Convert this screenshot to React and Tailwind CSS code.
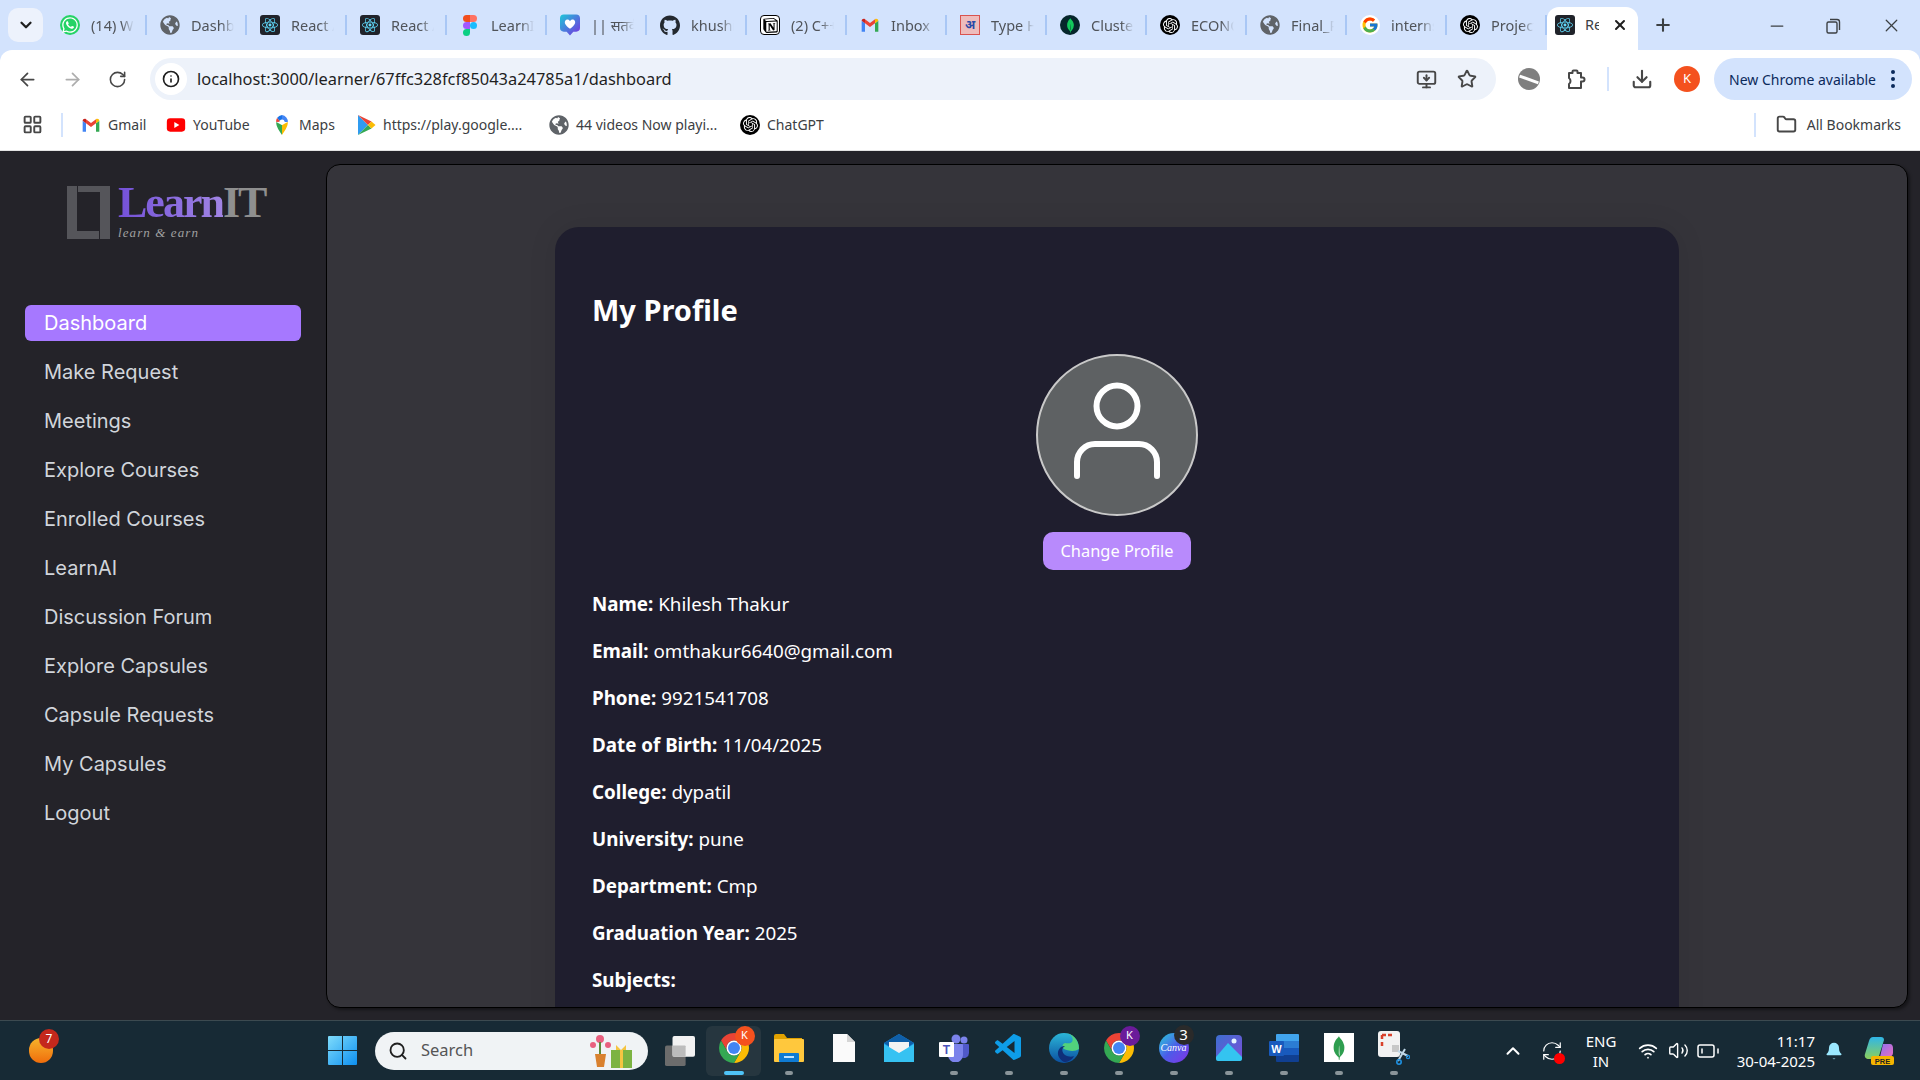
import React from 'react';
import {
  ArrowLeft, ArrowRight, RotateCw, Info, ChevronDown, ChevronUp, X, Plus, Minus, Star, Download,
  MonitorDown, LayoutGrid, Folder, Search, Wifi, Volume2, BatteryLow, Bell, RefreshCw,
} from 'lucide-react';
import { FaGlobeAmericas, FaGithub, FaWhatsapp } from 'react-icons/fa';
import { FcGoogle } from 'react-icons/fc';
import { SiReact, SiNotion, SiMongodb, SiOpenai } from 'react-icons/si';
import { VscVscode } from 'react-icons/vsc';

// small multi colour logos
function GmailIcon({ size = 20 }) {
  return (
    <svg width={size} height={size} viewBox="0 0 24 24">
      <path d="M2 20h4V10L2 7z" fill="#4285f4" />
      <path d="M18 20h4V7l-4 3z" fill="#34a853" />
      <path d="M6 10l6 4.5 6-4.5V5l-6 4.5L6 5z" fill="#ea4335" />
      <path d="M2 7c0-2.2 2.5-3.2 4-2v5z" fill="#c5221f" />
      <path d="M22 7c0-2.2-2.5-3.2-4-2v5z" fill="#fbbc04" />
    </svg>
  );
}

function YoutubeIcon() {
  return (
    <svg width="20" height="20" viewBox="0 0 24 24">
      <rect x="1" y="4" width="22" height="16" rx="4" fill="#f00" />
      <path d="M10 8.5v7l6-3.5z" fill="#fff" />
    </svg>
  );
}

function MapsIcon() {
  return (
    <svg width="20" height="22" viewBox="0 0 24 26">
      <path d="M12 25C9 20 5 16 5 9.5L12 13z" fill="#34a853" />
      <path d="M12 25c3-5 7-9 7-15.500L12 13z" fill="#fbbc04" />
      <path d="M6 4.500A9 9 0 0 1 12 1v7a3 3 0 0 0-2 1z" fill="#1a73e8" />
      <path d="M5 9.500a8 8 0 0 1 1-5l4 4.500z" fill="#ea4335" />
      <path d="M12 1a8 8 0 0 1 7 8.500h-4A3 3 0 0 0 12 7z" fill="#4285f4" />
      <circle cx="12" cy="9.500" r="3" fill="#fff" />
    </svg>
  );
}

function PlayIcon() {
  return (
    <svg width="20" height="22" viewBox="0 0 20 22">
      <path d="M2 1v20l10-10z" fill="#2f9bf0" />
      <path d="M2 1l10 10 3.500-3.500z" fill="#ea4335" />
      <path d="M2 21l10-10 3.500 3.500z" fill="#34a853" />
      <path d="M15.500 7.500L19.500 11l-4 3.500L12 11z" fill="#fbbc04" />
    </svg>
  );
}

function FigmaIcon() {
  return (
    <svg width="14" height="21" viewBox="0 0 12 18">
      <path d="M6 0H3a3 3 0 0 0 0 6h3z" fill="#f24e1e" />
      <path d="M6 0h3a3 3 0 0 1 0 6H6z" fill="#ff7262" />
      <path d="M6 6H3a3 3 0 0 0 0 6h3z" fill="#a259ff" />
      <circle cx="9" cy="9" r="3" fill="#1abcfe" />
      <path d="M6 12H3a3 3 0 1 0 3 3z" fill="#0acf83" />
    </svg>
  );
}

function HeartBadge() {
  return (
    <svg width="21" height="22" viewBox="0 0 21 22">
      <defs>
        <linearGradient id="hb" x1="0" y1="0" x2="1" y2="1">
          <stop offset="0" stopColor="#1cc8d8" />
          <stop offset="1" stopColor="#7a2fe0" />
        </linearGradient>
      </defs>
      <path d="M4 0h13a4 4 0 0 1 4 4v10a4 4 0 0 1-4 4h-3l-3.500 4L7 18H4a4 4 0 0 1-4-4V4a4 4 0 0 1 4-4z" fill="url(#hb)" />
      <path d="M10.500 15C5 11 4.500 8.500 5.500 6.500c1.300-2 4-1.500 5 .5 1-2 3.700-2.500 5-.5 1 2 .5 4.500-5 8.500z" fill="#fff" />
    </svg>
  );
}

function ReactTile() {
  return (
    <span className="flex h-5 w-5 items-center justify-center rounded-[3px] bg-[#20232a]">
      <SiReact className="h-4 w-4 text-[#61dafb]" />
    </span>
  );
}

function Globe({ size = 20 }) {
  return <FaGlobeAmericas size={size} className="text-[#5f6368]" />;
}

function OpenaiDot({ size = 20 }) {
  return (
    <span className="flex items-center justify-center rounded-full bg-black" style={{ width: size, height: size }}>
      <SiOpenai size={size - 5} className="text-white" />
    </span>
  );
}

function ChromeIcon({ size = 30 }) {
  return (
    <svg width={size} height={size} viewBox="4 4 40 40">
      <path d="M24 4C16.600 4 10.100 8 6.700 14l8.600 15A10 10 0 0 1 24 14h17.300C37.900 8 31.400 4 24 4z" fill="#ea4335" />
      <path d="M41.300 14H24a10 10 0 0 1 8.700 15L24 44c11 0 20-9 20-20 0-3.600-1-7-2.700-10z" fill="#fbbc04" />
      <path d="M6.700 14A20 20 0 0 0 24 44l8.700-15a10 10 0 0 1-17.400 0z" fill="#34a853" />
      <circle cx="24" cy="24" r="10" fill="#fff" />
      <circle cx="24" cy="24" r="8" fill="#4285f4" />
    </svg>
  );
}

function PuzzleIcon() {
  return (
    <svg width="24" height="24" viewBox="0 0 24 24" fill="none" stroke="currentColor" strokeWidth="2" strokeLinejoin="round">
      <path d="M6 6h3.500V4.500a1 1 0 0 1 1-1h3a1 1 0 0 1 1 1V6H18v4.500h1.500a2 2 0 0 1 0 4H18V21H6v-4a3.500 3.500 0 0 0 1.500-3A3.500 3.500 0 0 0 6 11z" />
    </svg>
  );
}

const TABS = [
  { icon: <span className="flex h-5 w-5 items-center justify-center rounded-full bg-[#25d366]"><FaWhatsapp size={18} className="text-white" /></span>, label: '(14) WhatsApp' },
  { icon: <Globe />, label: 'Dashboard' },
  { icon: <ReactTile />, label: 'React App' },
  { icon: <ReactTile />, label: 'React App' },
  { icon: <FigmaIcon />, label: 'LearnIT' },
  { icon: <HeartBadge />, label: '|| सतर्क' },
  { icon: <FaGithub size={21} className="text-[#24292f]" />, label: 'khushi' },
  { icon: <span className="flex h-5 w-5 items-center justify-center rounded-[4px] border border-black bg-white"><SiNotion size={15} className="text-black" /></span>, label: '(2) C++' },
  { icon: <GmailIcon />, label: 'Inbox' },
  { icon: <span className="flex h-5 w-5 items-center justify-center border border-[#d9534f] bg-[#eebcbc] text-[12px] font-bold text-[#2a4aa8]">अ</span>, label: 'Type Hindi' },
  { icon: <span className="flex h-5 w-5 items-center justify-center rounded-full bg-[#06262b]"><SiMongodb size={15} className="text-[#13c85c]" /></span>, label: 'Cluster' },
  { icon: <OpenaiDot />, label: 'ECONOMICS' },
  { icon: <Globe />, label: 'Final_Project' },
  { icon: <span className="flex h-5 w-5 items-center justify-center rounded-full bg-white"><FcGoogle size={18} /></span>, label: 'internship' },
  { icon: <OpenaiDot />, label: 'Project' },
];

const BOOKMARKS = [
  { icon: <GmailIcon />, label: 'Gmail', w: 'w-[85px]' },
  { icon: <YoutubeIcon />, label: 'YouTube', w: 'w-[106px]' },
  { icon: <MapsIcon />, label: 'Maps', w: 'w-[84px]' },
  { icon: <PlayIcon />, label: 'https://play.google....', w: 'w-[193px]' },
  { icon: <Globe />, label: '44 videos Now playi...', w: 'w-[191px]' },
  { icon: <OpenaiDot />, label: 'ChatGPT', w: 'w-[90px]' },
];

const NAV = [
  'Dashboard', 'Make Request', 'Meetings', 'Explore Courses', 'Enrolled Courses', 'LearnAI',
  'Discussion Forum', 'Explore Capsules', 'Capsule Requests', 'My Capsules', 'Logout',
];

const PROFILE = [
  ['Name:', 'Khilesh Thakur'],
  ['Email:', 'omthakur6640@gmail.com'],
  ['Phone:', '9921541708'],
  ['Date of Birth:', '11/04/2025'],
  ['College:', 'dypatil'],
  ['University:', 'pune'],
  ['Department:', 'Cmp'],
  ['Graduation Year:', '2025'],
  ['Subjects:', ''],
];

function TabStrip() {
  return (
    <div className="flex h-[50px] shrink-0 items-start bg-[#d3e3fd] pl-2">
      <div className="mt-2 flex h-[34px] w-[35px] items-center justify-center rounded-[10px] bg-[#edf2fc]">
        <ChevronDown size={18} strokeWidth={3} className="text-[#1f1f1f]" />
      </div>
      <div className="ml-[4px] flex">
        {TABS.map((tab, i) => (
          <div key={i} className="mt-[15px] flex h-5 w-[100px] items-center">
            <div className="ml-[13px] flex w-5 shrink-0 items-center justify-center">{tab.icon}</div>
            <div className="ml-[11px] w-[43px] overflow-hidden whitespace-nowrap text-[14.500px] leading-5 text-[#50545a] [mask-image:linear-gradient(to_right,black_70%,transparent)]">
              {tab.label}
            </div>
            <div className="ml-auto h-5 w-[2px] bg-[#a9c7f5]" />
          </div>
        ))}
      </div>
      {/* active tab */}
      <div className="mt-[7px] flex h-[43px] w-[91px] items-center rounded-t-[12px] bg-white pb-[7px] pl-2">
        <ReactTile />
        <div className="ml-[10px] w-[14px] overflow-hidden whitespace-nowrap text-[14.500px] text-[#3c4043]">React</div>
        <X size={16} strokeWidth={3} className="ml-[13px] text-[#1f1f1f]" />
      </div>
      <Plus size={20} strokeWidth={2.5} className="mt-[15px] ml-[15px] text-[#3c4043]" />
      <div className="ml-auto mt-[15px] flex w-[153px] items-center pr-[18px] text-[#3c4043]">
        <Minus size={20} strokeWidth={1.5} />
        <svg width="18" height="18" viewBox="0 0 18 18" fill="none" stroke="currentColor" strokeWidth="1.4" className="ml-[37px]">
          <rect x="3" y="5" width="10" height="11" rx="1.500" />
          <path d="M6 2.500h7a2.500 2.500 0 0 1 2.500 2.500v8" />
        </svg>
        <X size={21} strokeWidth={1.4} className="ml-auto" />
      </div>
    </div>
  );
}

function Toolbar() {
  return (
    <div className="flex h-[50px] shrink-0 items-start rounded-t-[12px] bg-white pt-2">
      <div className="flex h-[42px] w-[150px] items-center text-[#474747]">
        <ArrowLeft size={21} className="ml-[17px]" />
        <ArrowRight size={21} className="ml-6 text-[#adadad]" />
        <RotateCw size={19} className="ml-[25px]" />
      </div>
      <div className="flex h-[42px] w-[1346px] items-center rounded-full bg-[#edf2fa] pl-[5px] pr-[19px]">
        <div className="flex h-8 w-8 items-center justify-center rounded-full bg-white">
          <Info size={18} strokeWidth={2.2} className="text-[#1f1f1f]" />
        </div>
        <span className="ml-[10px] text-[16.400px] text-[#1f1f1f]">localhost:3000/learner/67ffc328fcf85043a24785a1/dashboard</span>
        <MonitorDown size={21} strokeWidth={2.2} className="ml-auto text-[#474747]" />
        <Star size={20} strokeWidth={2.3} className="ml-[20px] text-[#474747]" />
      </div>
      <div className="flex h-[42px] flex-1 items-center pr-2 text-[#474747]">
        <span className="ml-[22px] flex h-[22px] w-[22px] items-center justify-center rounded-full bg-[#7f7f7f]">
          <span className="h-[3px] w-[20px] rotate-[20deg] bg-white" />
        </span>
        <span className="ml-[23px]"><PuzzleIcon /></span>
        <div className="ml-[20px] h-[24px] w-[2px] bg-[#d3e3fd]" />
        <Download size={22} strokeWidth={2.3} className="ml-[22px]" />
        <span className="ml-[21px] flex h-[26px] w-[26px] items-center justify-center rounded-full bg-[#f4511e] text-[13px] text-white">K</span>
        <div className="ml-[14px] flex h-[42px] flex-1 items-center rounded-full bg-[#d3e3fd] pl-[15px] text-[14px] text-[#0b2a5b]">
          New Chrome available
          <span className="ml-auto mr-[17px] flex flex-col gap-[3px]">
            <i className="h-1 w-1 rounded-full bg-[#0b2a5b]" />
            <i className="h-1 w-1 rounded-full bg-[#0b2a5b]" />
            <i className="h-1 w-1 rounded-full bg-[#0b2a5b]" />
          </span>
        </div>
      </div>
    </div>
  );
}

function BookmarksBar() {
  return (
    <div className="flex h-[51px] shrink-0 items-center border-b border-[#e3e3e3] bg-white pb-[1px] text-[14px] text-[#3c4043]">
      <LayoutGrid size={21} strokeWidth={2.2} className="ml-[22px] text-[#474747]" />
      <div className="ml-[18px] h-[24px] w-[2px] bg-[#d3e3fd]" />
      <div className="ml-[18px] flex">
        {BOOKMARKS.map(b => (
          <div key={b.label} className={`flex items-center gap-[7px] ${b.w}`}>
            <span className="flex w-5 justify-center">{b.icon}</span>
            <span className="whitespace-nowrap">{b.label}</span>
          </div>
        ))}
      </div>
      <div className="ml-auto h-[24px] w-[2px] bg-[#d3e3fd]" />
      <Folder size={21} strokeWidth={2.2} className="ml-[20px] text-[#474747]" />
      <span className="ml-[10px] mr-[19px]">All Bookmarks</span>
    </div>
  );
}

function Logo() {
  return (
    <div className="ml-[67px] flex h-[53px] items-start">
      <svg width="43" height="53" viewBox="0 0 43 53" className="shrink-0 text-[#55555a]">
        <path d="M0 0h10v45h22v8H0zM11 0h32v53H33V6H11z" fill="currentColor" />
      </svg>
      <div className="ml-[8px] -mt-[5px]">
        <div className="font-['Liberation_Serif',serif] text-[44px] font-bold leading-[44px] tracking-[-2px]">
          <span className="bg-gradient-to-r from-[#7450d8] to-[#a184e4] bg-clip-text text-transparent">Learn</span>
          <span className="text-[#8f8f8f]">IT</span>
        </div>
        <div className="mt-[1px] font-['Liberation_Serif',serif] text-[13px] italic leading-[13px] tracking-[1.1px] text-[#a0a0a0]">learn &amp; earn</div>
      </div>
    </div>
  );
}

function Sidebar() {
  return (
    <aside className="w-[326px] shrink-0 pt-[35px] font-['Inter',sans-serif]">
      <Logo />
      <nav className="mt-[66px] ml-[25px] flex w-[276px] flex-col gap-[13px]">
        {NAV.map((item, i) => (
          <div
            key={item}
            className={`flex h-9 items-center rounded-[6px] pl-[19px] text-[20px] ${i === 0 ? 'bg-[#a678ff] text-white' : 'text-[#d1d5db]'}`}
          >
            {item}
          </div>
        ))}
      </nav>
    </aside>
  );
}

function AvatarIcon() {
  return (
    <svg width="158" height="158" viewBox="2 2 158 158" fill="none" stroke="#fff" strokeWidth="6" strokeLinecap="round">
      <circle cx="81" cy="52" r="20.500" />
      <path d="M41 122v-14a18 18 0 0 1 18-18h44a18 18 0 0 1 18 18v14" />
    </svg>
  );
}

function ProfileCard() {
  return (
    <div className="mx-auto mt-[62px] w-[1124px] rounded-t-[24px] bg-[#1f1e2e] px-[37px] pt-[61px] pb-10 font-['Noto_Sans',sans-serif] text-white shadow-[0_0_30px_rgba(0,0,0,0.08)]">
      <h2 className="text-[29px] font-bold leading-[44px]">My Profile</h2>
      <div className="mt-[22px] flex flex-col items-center">
        <div className="flex h-[162px] w-[162px] items-center justify-center rounded-full border-2 border-[#c9c9c9] bg-[#5e6163]">
          <AvatarIcon />
        </div>
        <button className="mt-4 h-[38px] w-[148px] rounded-[10px] bg-[#b88afc] pt-[1px] text-[16.400px] text-white">Change Profile</button>
      </div>
      <div className="mt-5 flex flex-col gap-[19px]">
        {PROFILE.map(([label, value]) => (
          <p key={label} className="text-[18.800px] leading-7">
            <strong className="font-bold">{label}</strong> {value}
          </p>
        ))}
      </div>
    </div>
  );
}

function WindowsLogo() {
  return (
    <svg width="29" height="29" viewBox="0 0 29 29">
      <defs>
        <linearGradient id="win" x1="0" y1="0" x2="1" y2="1">
          <stop offset="0" stopColor="#7fdcfb" />
          <stop offset="1" stopColor="#0d8ff0" />
        </linearGradient>
      </defs>
      <path d="M1 0h13v14H0V1a1 1 0 0 1 1-1zM15 0h13a1 1 0 0 1 1 1v13H15zM0 15h14v14H1a1 1 0 0 1-1-1zM15 15h14v13a1 1 0 0 1-1 1H15z" fill="url(#win)" />
    </svg>
  );
}

const TASK_ICONS = [
  {
    dot: 'active',
    node: (
      <div className="relative">
        <ChromeIcon />
        <span className="absolute -right-[6px] -top-[7px] flex h-5 w-5 items-center justify-center rounded-full bg-[#f4511e] text-[11px] text-white">K</span>
      </div>
    ),
  },
  {
    dot: true,
    node: (
      <svg width="30" height="28" viewBox="0 0 30 28">
        <path d="M0 2a2 2 0 0 1 2-2h8l3 4h15v4H0z" fill="#e0a100" />
        <rect y="5" width="30" height="23" rx="1" fill="#ffc83d" />
        <rect x="5" y="19" width="20" height="9" rx="1" fill="#0f7bd4" />
        <rect x="10" y="22" width="10" height="2" fill="#bfe3ff" />
      </svg>
    ),
  },
  {
    dot: false,
    node: (
      <svg width="22" height="28" viewBox="0 0 22 28">
        <path d="M0 0h14l8 8v20H0z" fill="#fafafa" />
        <path d="M14 0l8 8h-8z" fill="#d5d5d5" />
      </svg>
    ),
  },
  {
    dot: false,
    node: (
      <svg width="30" height="28" viewBox="0 0 30 28">
        <path d="M0 9L15 0l15 9v19H0z" fill="#1d8fe0" />
        <path d="M0 9L15 0l15 9-15 10z" fill="#0f5fa8" />
        <path d="M5 8h20v6l-10 6-10-6z" fill="#f3f3f3" />
        <path d="M0 10l15 9 15-9v18H0z" fill="#36c2f2" />
      </svg>
    ),
  },
  {
    dot: true,
    node: (
      <svg width="30" height="28" viewBox="0 0 30 28">
        <circle cx="25" cy="6" r="3.500" fill="#7b83eb" />
        <circle cx="17" cy="5" r="4.500" fill="#7b83eb" />
        <path d="M22 10h7a1 1 0 0 1 1 1v8a5 5 0 0 1-8 4z" fill="#5059c9" />
        <path d="M9 10h14a1 1 0 0 1 1 1v10a7 7 0 0 1-15 0z" fill="#7b83eb" />
        <rect x="0" y="8" width="15" height="15" rx="1" fill="#fff" />
        <text x="7.500" y="20" textAnchor="middle" fontSize="12" fontWeight="700" fill="#4b53bc" fontFamily="Liberation Sans">T</text>
      </svg>
    ),
  },
  { dot: true, node: <VscVscode size={32} className="text-[#0e9de8]" /> },
  {
    dot: true,
    node: (
      <svg width="30" height="30" viewBox="0 0 30 30">
        <defs>
          <linearGradient id="edge" x1="0" y1="0" x2="0" y2="1">
            <stop offset="0" stopColor="#2bb6d8" />
            <stop offset="1" stopColor="#0b4fa0" />
          </linearGradient>
        </defs>
        <circle cx="15" cy="15" r="15" fill="url(#edge)" />
        <path d="M30 16c0-9-6-16-15-16 8 0 10 6 8 9-2 2-5 1-7 1-3 1-3 4-1 6 4 2 11 3 15 0z" fill="#52d17c" />
        <path d="M15 29c-6-3-8-10-4-14 2-2 5-2 5-2-4 2-3 7 0 9 3 2 7 2 9 1-2 4-6 6-10 6z" fill="#0f2f7a" />
      </svg>
    ),
  },
  {
    dot: true,
    node: (
      <div className="relative">
        <ChromeIcon />
        <span className="absolute -right-[6px] -top-[7px] flex h-5 w-5 items-center justify-center rounded-full bg-[#6a1b9a] text-[11px] text-white">K</span>
      </div>
    ),
  },
  {
    dot: true,
    node: (
      <div className="relative">
        <div className="flex h-[30px] w-[30px] items-center justify-center rounded-full bg-gradient-to-br from-[#19c7d4] via-[#4a5be8] to-[#7d2ae8] font-['Liberation_Serif',serif] text-[10px] italic text-white">Canva</div>
        <span className="absolute -right-[5px] -top-[8px] flex h-5 w-5 items-center justify-center rounded-full bg-[#2a2a2a] text-[15px] text-white">3</span>
      </div>
    ),
  },
  {
    dot: true,
    node: (
      <svg width="26" height="26" viewBox="0 0 26 26">
        <defs>
          <linearGradient id="ph" x1="0" y1="0" x2="1" y2="1">
            <stop offset="0" stopColor="#3d6fd0" />
            <stop offset="1" stopColor="#7b4ed8" />
          </linearGradient>
        </defs>
        <rect width="26" height="26" rx="4" fill="url(#ph)" />
        <circle cx="18" cy="6" r="2.500" fill="#e5f4ff" />
        <path d="M0 22L12 8l14 14v2a2 2 0 0 1-2 2H2a2 2 0 0 1-2-2z" fill="#34c4f0" />
      </svg>
    ),
  },
  {
    dot: true,
    node: (
      <svg width="30" height="28" viewBox="0 0 30 28">
        <path d="M7 1a1 1 0 0 1 1-1h21a1 1 0 0 1 1 1v6H7z" fill="#41a5ee" />
        <rect x="7" y="7" width="23" height="7" fill="#2b7cd3" />
        <rect x="7" y="14" width="23" height="7" fill="#185abd" />
        <path d="M7 21h23v6a1 1 0 0 1-1 1H8a1 1 0 0 1-1-1z" fill="#103f91" />
        <rect x="0" y="7" width="15" height="15" rx="1" fill="#185abd" />
        <text x="7.500" y="19" textAnchor="middle" fontSize="11" fontWeight="700" fill="#fff" fontFamily="Liberation Sans">W</text>
      </svg>
    ),
  },
  {
    dot: true,
    node: (
      <span className="flex h-[29px] w-[30px] items-center justify-center bg-white">
        <SiMongodb size={24} className="text-[#2e9e4f]" />
      </span>
    ),
  },
  {
    dot: true,
    node: (
      <svg width="32" height="34" viewBox="0 0 32 34">
        <rect x="0" y="0" width="22" height="26" rx="3" fill="#f2f2f2" />
        <path d="M4 4h4M10 4h4M4 4v4M4 11v4" stroke="#d9412b" strokeWidth="2.500" />
        <path d="M14 14h7v7h-7z" fill="#c8c8c8" />
        <path d="M20 20l10 5M27 18l-7 12" stroke="#c0d8e8" strokeWidth="2" />
        <circle cx="21" cy="31" r="2.200" fill="none" stroke="#1e90e0" strokeWidth="1.600" />
        <circle cx="30" cy="26" r="1.600" fill="none" stroke="#1e90e0" strokeWidth="1.200" />
      </svg>
    ),
  },
];

function Taskbar() {
  return (
    <div className="flex h-[60px] shrink-0 items-center border-t border-[#3c4a50] bg-[#172a35] font-['Noto_Sans',sans-serif] text-white">
      {/* tray app on the far left */}
      <div className="relative ml-[29px] h-[25px] w-[24px] rounded-full bg-gradient-to-b from-[#f5b32a] to-[#ef6c0a]">
        <span className="absolute -right-[6px] -top-[9px] flex h-5 w-5 items-center justify-center rounded-full bg-[#c4281c] text-[12px]">7</span>
      </div>
      <div className="ml-[275px]"><WindowsLogo /></div>
      <div className="ml-[18px] flex h-[38px] w-[273px] items-center rounded-full bg-[#f0f3f5] pl-[13px] pr-[14px] text-[16.500px] text-[#555]">
        <Search size={20} strokeWidth={2.2} className="text-[#1f1f1f]" />
        <span className="ml-[13px]">Search</span>
        <svg width="44" height="36" viewBox="0 0 44 36" className="ml-auto">
          <circle cx="10" cy="6" r="4" fill="#e8607f" />
          <circle cx="3" cy="12" r="3" fill="#e8607f" />
          <circle cx="18" cy="12" r="3" fill="#e8607f" />
          <path d="M10 9v12" stroke="#5c8a3a" strokeWidth="2" />
          <path d="M5 21h11l-2 13H7z" fill="#d9812f" />
          <rect x="21" y="17" width="21" height="18" fill="#7cb342" />
          <rect x="30" y="17" width="3" height="18" fill="#f5c542" />
          <path d="M26 12l5 5 5-5v5H26z" fill="#f5c542" />
        </svg>
      </div>
      <svg width="30" height="30" viewBox="0 0 32 32" className="ml-[17px] mr-[1px]">
        <rect x="0" y="10" width="22" height="22" rx="2" fill="#6c6c6c" />
        <rect x="8" y="0" width="24" height="22" rx="2" fill="#f2f2f2" />
        <rect x="8" y="10" width="14" height="12" rx="1" fill="#bcbcbc" />
      </svg>
      {/* pinned apps, 55px apart */}
      <div className="ml-[10px] flex">
        {TASK_ICONS.map((app, i) => (
          <div
            key={i}
            className={`relative flex h-[50px] w-[55px] items-center justify-center pb-[6px] ${i === 0 ? 'rounded-[6px] bg-[#26363f]' : ''}`}
          >
            {app.node}
            {app.dot === 'active' && <span className="absolute bottom-[1px] h-[4px] w-5 rounded-full bg-[#4fc3f7]" />}
            {app.dot === true && <span className="absolute bottom-[1px] h-[4px] w-2 rounded-full bg-[#8a9499]" />}
          </div>
        ))}
      </div>
      {/* system tray */}
      <ChevronUp size={22} strokeWidth={2.2} className="ml-[81px]" />
      <div className="relative ml-[17px]">
        <RefreshCw size={22} strokeWidth={1.3} />
        <span className="absolute -bottom-[2px] -right-[2px] h-[11px] w-[11px] rounded-full bg-[#f00]" />
      </div>
      <div className="ml-[18px] flex w-[40px] flex-col items-center text-[15px] leading-[20px]">
        <span>ENG</span>
        <span>IN</span>
      </div>
      <Wifi size={20} className="ml-[17px]" />
      <Volume2 size={21} strokeWidth={1.6} className="ml-[10px]" />
      <BatteryLow size={24} strokeWidth={1.5} className="ml-[7px]" />
      <div className="ml-[11px] flex w-[84px] flex-col items-end text-[15px] leading-[20px]">
        <span>11:17</span>
        <span className="whitespace-nowrap">30-04-2025</span>
      </div>
      <Bell size={20} fill="#9be8ff" strokeWidth={0} className="ml-[9px]" />
      {/* copilot ribbon with PRE badge */}
      <svg width="30" height="30" viewBox="0 0 30 30" className="ml-[20px]">
        <defs>
          <linearGradient id="copa" x1="0" y1="0" x2="0" y2="1">
            <stop offset="0" stopColor="#2fb6e8" />
            <stop offset="1" stopColor="#8ccf5a" />
          </linearGradient>
          <linearGradient id="copb" x1="0" y1="0" x2="1" y2="1">
            <stop offset="0" stopColor="#8f6ff0" />
            <stop offset="1" stopColor="#e76fc0" />
          </linearGradient>
        </defs>
        <path d="M9 1h8c2 0 3 1 3 3L15 20c-1 2-2 3-4 3H5c-3 0-5-2-4-5L5 5c1-3 2-4 4-4z" fill="url(#copa)" />
        <path d="M19 8h7c2 0 3 2 3 4v5c0 2-2 4-4 4h-9z" fill="url(#copb)" />
        <rect x="7" y="20" width="23" height="9" rx="2" fill="#f5b400" />
        <text x="18.500" y="27.500" textAnchor="middle" fontSize="7.500" fontWeight="700" fill="#222" fontFamily="Liberation Sans">PRE</text>
      </svg>
    </div>
  );
}

export default function App() {
  return (
    <div className="flex h-screen flex-col overflow-hidden bg-[#d3e3fd] font-['Noto_Sans',sans-serif]">
      <TabStrip />
      <Toolbar />
      <BookmarksBar />
      <div className="flex min-h-0 flex-1 bg-[#242329]">
        <Sidebar />
        <main className="mt-[13px] mb-[12px] mr-3 min-w-0 flex-1 overflow-hidden rounded-[14px] border border-black bg-[#35343a] shadow-[2px_2px_3px_rgba(0,0,0,0.4)]">
          <ProfileCard />
        </main>
      </div>
      <Taskbar />
    </div>
  );
}
